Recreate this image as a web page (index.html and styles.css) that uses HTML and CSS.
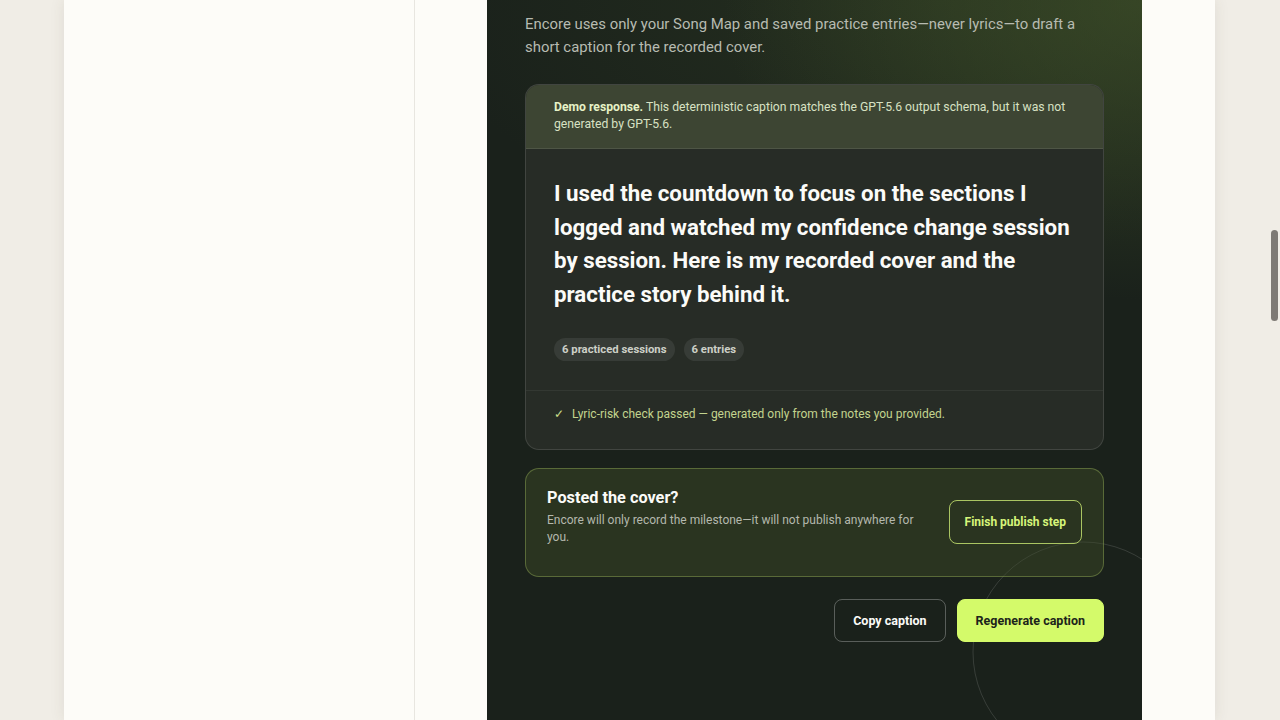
FILE: index.html
```html
<!DOCTYPE html>
<html lang="en">
<head>
<meta charset="utf-8">
<title>Encore – Caption</title>
<link rel="stylesheet" href="styles.css">
</head>
<body>
<div class="page">
  <aside class="side"></aside>
  <main class="main">
    <section class="panel">
      <svg class="ring" width="222" height="222" viewBox="0 0 222 222" aria-hidden="true"><circle cx="111" cy="111" r="110" fill="none" stroke="rgba(255,255,255,0.13)" stroke-width="1"/></svg>
      <p class="intro">Encore uses only your Song Map and saved practice entries—never lyrics—to draft a short caption for the recorded cover.</p>

      <div class="card">
        <p class="card-head"><strong>Demo response.</strong> This deterministic caption matches the GPT-5.6 output schema, but it was not generated by GPT-5.6.</p>
        <div class="card-body">
          <p class="caption">I used the countdown to focus on the sections I logged and watched my confidence change session by session. Here is my recorded cover and the practice story behind it.</p>
          <div class="pills">
            <span class="pill">6 practiced sessions</span>
            <span class="pill">6 entries</span>
          </div>
        </div>
        <div class="card-foot"><span class="check">✓</span>Lyric-risk check passed — generated only from the notes you provided.</div>
      </div>

      <div class="publish">
        <div class="publish-text">
          <h3>Posted the cover?</h3>
          <p>Encore will only record the milestone—it will not publish anywhere for you.</p>
        </div>
        <button class="btn btn-outline-lime">Finish publish step</button>
      </div>

      <div class="actions">
        <button class="btn btn-ghost">Copy caption</button>
        <button class="btn btn-lime">Regenerate caption</button>
      </div>
    </section>
  </main>
</div>
<div class="scroll-thumb"></div>
</body>
</html>
```

FILE: styles.css
```css
* { box-sizing: border-box; }
html, body { margin: 0; height: 720px; overflow: hidden; }
body {
  background: #f0ede6;
  font-family: Roboto, "Noto Sans", sans-serif;
  color: #fff;
}
.page {
  margin-left: 64px;
  width: 1151px;
  height: 720px;
  background: #fdfcf8;
  display: flex;
  box-shadow: 0 0 14px rgba(80, 70, 50, 0.10);
}
.side {
  width: 351px;
  flex: none;
  border-right: 1px solid #e8e6e0;
}
.main {
  flex: 1;
  padding-left: 72px;
}
.panel {
  position: relative;
  overflow: hidden;
  width: 655px;
  height: 720px;
  padding: 13px 38px 0;
  background:
    radial-gradient(ellipse 420px 300px at 100% 0%, rgba(72, 92, 44, 0.55), rgba(72, 92, 44, 0) 100%),
    radial-gradient(ellipse 520px 260px at 70% 0%, rgba(50, 64, 36, 0.45), rgba(50, 64, 36, 0) 100%),
    #1a211b;
}
.ring {
  position: absolute;
  left: 485px;
  top: 541px;
}
.intro {
  position: relative;
  margin: 0;
  font-size: 14.9px;
  line-height: 23px;
  color: #b7bbb1;
  max-width: 560px;
}
.card {
  position: relative;
  margin-top: 25px;
  border: 1px solid rgba(255, 255, 255, 0.12);
  border-radius: 14px;
  background: #272c26;
  overflow: hidden;
}
.card-head {
  margin: 0;
  background: #3d4533;
  padding: 14px 28px 15px;
  font-size: 12.2px;
  line-height: 17px;
  color: #d8e1c3;
  border-bottom: 1px solid rgba(255, 255, 255, 0.09);
}
.card-head strong { color: #e6f2c6; font-weight: 700; }
.card-body {
  padding: 28px 28px 29px;
  border-bottom: 1px solid rgba(255, 255, 255, 0.06);
}
.caption {
  margin: 0;
  font-size: 22.3px;
  line-height: 33.6px;
  font-weight: 700;
  color: #fbfbf8;
}
.pills {
  display: flex;
  gap: 9px;
  margin-top: 27px;
}
.pill {
  height: 23px;
  padding: 0 8px;
  border-radius: 12px;
  background: rgba(255, 255, 255, 0.08);
  font-size: 11.3px;
  font-weight: 700;
  line-height: 23px;
  color: #cdd0c7;
}
.card-foot {
  padding: 15px 28px 26px;
  font-size: 12px;
  line-height: 17px;
  color: #c3d48e;
}
.check { margin-right: 8px; color: #c9dc8a; }
.publish {
  position: relative;
  margin-top: 18px;
  display: flex;
  align-items: flex-start;
  gap: 24px;
  padding: 18px 21px 30px;
  border: 1px solid rgba(190, 220, 110, 0.32);
  border-radius: 14px;
  background: rgba(64, 78, 40, 0.42);
}
.publish-text { flex: 1; }
.publish h3 {
  margin: 0;
  font-size: 16.3px;
  line-height: 22px;
  font-weight: 700;
  color: #fbfbf8;
}
.publish p {
  margin: 3px 0 0;
  font-size: 12px;
  line-height: 17px;
  color: #b4b8ad;
}
.btn {
  font-family: inherit;
  font-size: 12.5px;
  font-weight: 700;
  border-radius: 8px;
  cursor: pointer;
  white-space: nowrap;
}
.btn-outline-lime {
  margin-top: 13px;
  height: 44px;
  padding: 0 15px;
  font-size: 12px;
  background: transparent;
  border: 1px solid rgba(214, 245, 120, 0.75);
  color: #d6f57a;
}
.actions {
  position: relative;
  display: flex;
  justify-content: flex-end;
  gap: 11px;
  margin-top: 22px;
}
.actions .btn { height: 43px; padding: 0 18px; }
.btn-ghost {
  background: transparent;
  border: 1px solid rgba(255, 255, 255, 0.28);
  color: #fbfbf8;
}
.btn-lime {
  background: #d4fa6a;
  border: 1px solid #d4fa6a;
  color: #1c241a;
}
.scroll-thumb {
  position: absolute;
  left: 1271px;
  top: 230px;
  width: 7px;
  height: 91px;
  border-radius: 4px;
  background: #7e7a75;
}
```
